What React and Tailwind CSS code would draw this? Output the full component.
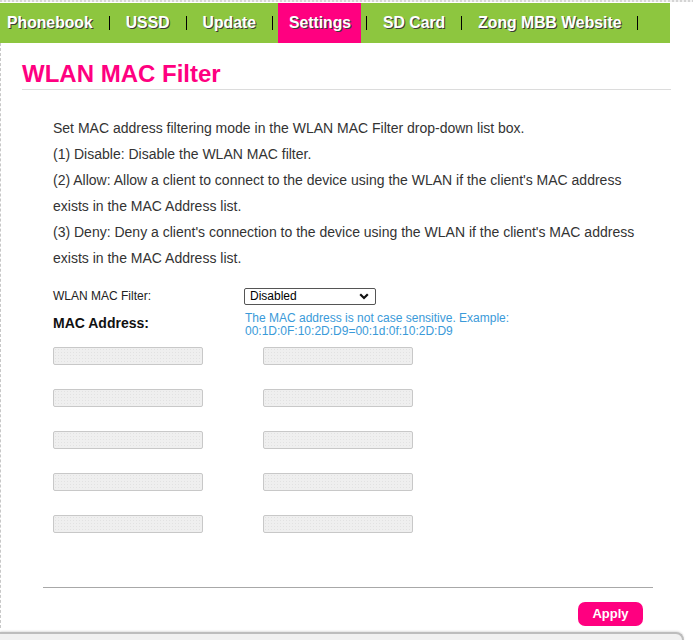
import React from "react";

const navItems = ["Phonebook", "USSD", "Update", "Settings", "SD Card", "Zong MBB Website"];

function Nav() {
  return (
    <div className="flex h-[40px] w-[670px] shrink-0 items-center bg-[#8dc63f] pl-[7px]">
      {navItems.map((item, i) => (
        <React.Fragment key={item}>
          <div
            className={
              "flex h-full items-center text-[15.75px] font-bold text-white [text-shadow:1px_1px_0_#3a3a3a] " +
              (i === 0 ? "pr-[11px]" : "px-[11px]") +
              (item === "Settings" ? " bg-[#ff0080] pr-[10px]" : "")
            }
          >
            {item}
          </div>
          <div className="mx-[5px] h-[14px] w-px bg-black" />
        </React.Fragment>
      ))}
    </div>
  );
}

function MacInput() {
  return (
    <div className="h-[18px] w-[150px] rounded-[2px] border border-[#c8c8c8] bg-[#efefef] bg-[radial-gradient(#e2e2e2_0.6px,transparent_0.7px)] bg-[length:3px_3px]" />
  );
}

export default function App() {
  return (
    <div className="flex h-[640px] w-[693px] flex-col overflow-hidden bg-white font-['Liberation_Sans',Arial,sans-serif]">
      <div className="h-[2px] w-full shrink-0 bg-[repeating-linear-gradient(90deg,#d4d4d4_0_2px,#f2f2f2_2px_4px)]" />
      <div className="h-px shrink-0" />
      <Nav />
      <div className="h-[585px] w-[680px] shrink-0 border-l border-dashed border-[#c8c8c8]">
        <div className="ml-[21px] mt-[17px] w-[649px] border-b border-[#dcdcdc] pb-px">
          <h1 className="text-[24px] font-bold leading-[28px] text-[#ff0080]">WLAN MAC Filter</h1>
        </div>
        <div className="ml-[52px] mt-[25px] w-[600px] text-[14px] leading-[26px] text-[#333]">
          <p>Set MAC address filtering mode in the WLAN MAC Filter drop-down list box.</p>
          <p>(1) Disable: Disable the WLAN MAC filter.</p>
          <p>(2) Allow: Allow a client to connect to the device using the WLAN if the client's MAC address exists in the MAC Address list.</p>
          <p>(3) Deny: Deny a client's connection to the device using the WLAN if the client's MAC address exists in the MAC Address list.</p>
        </div>
        <div className="ml-[52px] mt-[17px] flex h-[16px] items-center">
          <div className="w-[191px] text-[12px] text-[#222]">WLAN MAC Filter:</div>
          <div className="flex h-[17px] w-[132px] items-center justify-between rounded-[2px] border border-[#555] pl-[5px] pr-[6px] text-[12px] leading-none text-black">
            <span>Disabled</span>
            <svg width="10" height="7" viewBox="0 0 10 7" fill="none">
              <path d="M1.2 1.2l3.8 3.8 3.8-3.8" stroke="#111" strokeWidth="2.2" />
            </svg>
          </div>
        </div>
        <div className="ml-[52px] mt-[8px] flex">
          <div className="mt-[3px] w-[192px] text-[14px] font-bold leading-[16px] text-[#111]">MAC Address:</div>
          <div className="text-[12px] leading-[13px] text-[#3a9ad9]">
            <div>The MAC address is not case sensitive. Example:</div>
            <div>00:1D:0F:10:2D:D9=00:1d:0f:10:2D:D9</div>
          </div>
        </div>
        <div className="ml-[52px] mt-[9px] flex flex-col gap-[24px]">
          {[0, 1, 2, 3, 4].map((r) => (
            <div key={r} className="flex gap-[60px]">
              <MacInput />
              <MacInput />
            </div>
          ))}
        </div>
        <div className="ml-[42px] mt-[54px] h-px w-[610px] bg-[#a8a8a8]" />
        <div className="ml-[577px] mt-[14px] flex h-[24px] w-[65px] items-center justify-center rounded-[7px] bg-[#ff0080] text-[13px] font-bold text-white">
          Apply
        </div>
      </div>
      <div className="mt-[4px] h-[20px] w-[684px] shrink-0 rounded-tr-[8px] border-t-2 border-r-2 border-[#bdbdbd] bg-[#f1f1f1] shadow-[0_-1px_2px_rgba(0,0,0,0.12)]" />
    </div>
  );
}
